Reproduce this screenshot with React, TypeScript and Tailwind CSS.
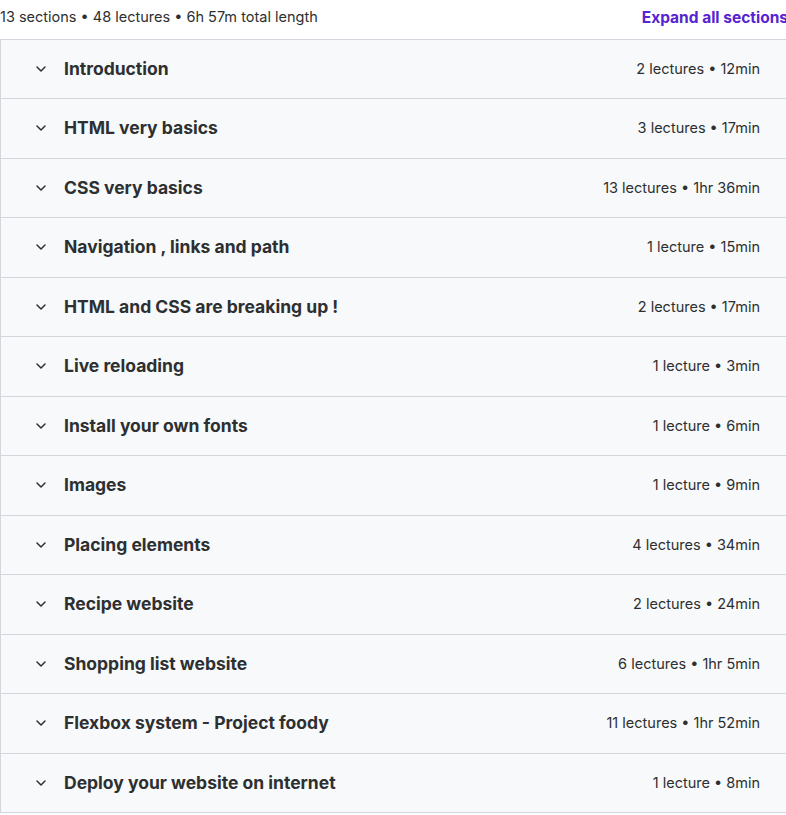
import { ChevronDown } from 'lucide-react';

type Section = {
  title: string;
  meta: string;
};

const sections: Section[] = [
  { title: 'Introduction', meta: '2 lectures • 12min' },
  { title: 'HTML very basics', meta: '3 lectures • 17min' },
  { title: 'CSS very basics', meta: '13 lectures • 1hr 36min' },
  { title: 'Navigation , links and path', meta: '1 lecture • 15min' },
  { title: 'HTML and CSS are breaking up !', meta: '2 lectures • 17min' },
  { title: 'Live reloading', meta: '1 lecture • 3min' },
  { title: 'Install your own fonts', meta: '1 lecture • 6min' },
  { title: 'Images', meta: '1 lecture • 9min' },
  { title: 'Placing elements', meta: '4 lectures • 34min' },
  { title: 'Recipe website', meta: '2 lectures • 24min' },
  { title: 'Shopping list website', meta: '6 lectures • 1hr 5min' },
  { title: 'Flexbox system - Project foody', meta: '11 lectures • 1hr 52min' },
  { title: 'Deploy your website on internet', meta: '1 lecture • 8min' },
];

const SectionRow = ({ section }: { section: Section }) => (
  <div className="flex h-[59.5px] items-center justify-between border-t border-[#d1d7dc] bg-[#f7f9fa] pl-[32px] pr-[27px] first:h-[58px] first:border-t-0">
    <div className="flex items-center gap-[15px]">
      <ChevronDown size={16} strokeWidth={2.25} className="text-[#2d2f31]" />
      <span className="text-[17.5px] font-bold text-[#2d2f31]">{section.title}</span>
    </div>
    <span className="text-[14.5px] text-[#2d2f31]">{section.meta}</span>
  </div>
);

export default function App() {
  return (
    <div className="w-full overflow-hidden bg-white font-['Inter',sans-serif]">
      <div className="w-[788px]">
        <div className="flex h-[39px] items-start justify-between pt-[6px]">
          <span className="text-[14.5px] text-[#2d2f31]">13 sections • 48 lectures • 6h 57m total length</span>
          <button className="text-[15.5px] font-bold text-[#5624d0]">Expand all sections</button>
        </div>
        <div className="border border-[#d1d7dc]">
          {sections.map((s) => (
            <SectionRow key={s.title} section={s} />
          ))}
        </div>
      </div>
    </div>
  );
}
